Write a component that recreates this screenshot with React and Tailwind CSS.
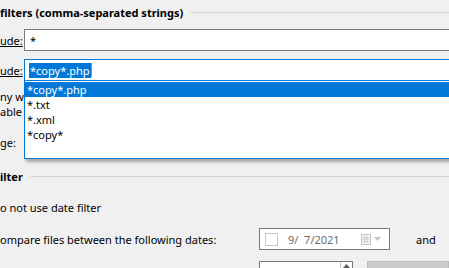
import React from 'react'

const font = { fontFamily: '"Noto Sans", "Liberation Sans", sans-serif' }

function DatePicker() {
  return (
    <div className="flex h-[22px] w-[131px] items-center border border-[#7a7a7a] bg-white">
      <span className="ml-[5px] h-[13px] w-[13px] border border-[#c8c8c8] bg-white" />
      <span className="ml-[10px] text-[#6d6d6d]">9/&nbsp;&nbsp;7/2021</span>
      <svg className="ml-auto" width="10" height="11" viewBox="0 0 10 11">
        <rect x="0.5" y="0.5" width="9" height="10" fill="#f4f4f4" stroke="#c4c4c4" />
        <path d="M2 3.5h6M2 5.5h6M2 7.5h6M3.5 2v7M6.5 2v7" stroke="#d2d2d2" />
      </svg>
      <svg className="ml-[3px] mr-[8px]" width="7" height="4" viewBox="0 0 7 4">
        <path d="M0 0h7L3.5 4z" fill="#c4c4c4" />
      </svg>
    </div>
  )
}

export default function App() {
  const items = ['*copy*.php', '*.txt', '*.xml', '*copy*']
  return (
    <div className="relative h-[268px] w-[449px] overflow-hidden bg-[#f0f0f0] text-[11px] leading-[15px] text-black" style={font}>
      <div className="mt-[4px] flex h-[17px] items-center">
        <span className="font-bold whitespace-nowrap">filters (comma-separated strings)</span>
        <span className="ml-[7px] h-px flex-1 bg-[#d4d8c8]" />
      </div>

      <div className="mt-[8px] flex h-[22px] items-center">
        <span className="w-[24px] underline">ude:</span>
        <div className="-mr-[10px] flex h-[22px] flex-1 items-center border border-[#7a7a7a] bg-white pl-[5px]">*</div>
      </div>

      <div className="mt-[8px] flex h-[22px] items-center">
        <span className="w-[24px] underline">ude:</span>
        <div className="-mr-[10px] flex h-[22px] flex-1 items-center border border-[#0078d7] bg-white pl-[4px]">
          <span className="bg-[#0078d7] px-px text-white">*copy*.php</span>
          <span className="h-[14px] w-px bg-[#d9822b]" />
        </div>
      </div>

      <div className="mt-[8px] flex flex-col">
        <span>ny w</span>
        <span>able</span>
      </div>
      <div className="mt-[12px] flex h-[22px] items-center">
        <span>ge:</span>
      </div>

      <div className="mt-[15px] flex h-[17px] items-center">
        <span className="font-bold">ilter</span>
        <span className="ml-[7px] h-px flex-1 bg-[#d5d5d5]" />
      </div>

      <div className="mt-[15px]">o not use date filter</div>

      <div className="mt-[13px] flex h-[22px] items-center">
        <span className="w-[259px] whitespace-nowrap">ompare files between the following dates:</span>
        <DatePicker />
        <span className="ml-[26px]">and</span>
      </div>

      <div className="mt-[11px] flex items-start">
        <span className="mt-[4px] w-[259px] pl-[76px] whitespace-nowrap">files that were modified in the last</span>
        <div className="flex h-[22px] w-[94px] border border-[#7a7a7a] bg-white">
          <span className="ml-auto flex h-full w-[12px] justify-center border-l border-[#c8c8c8] pt-[2px]">
            <svg width="7" height="4" viewBox="0 0 7 4">
              <path d="M3.5 0L7 4H0z" fill="#606060" />
            </svg>
          </span>
        </div>
        <div className="ml-[14px] h-[22px] flex-1 border border-[#bcbcbc] bg-[#cccccc]" />
      </div>

      <div className="absolute left-[24px] top-[80px] h-[79px] w-[440px] border border-[#0078d7] bg-white pt-px shadow-[2px_3px_3px_rgba(0,0,0,0.3)]">
        {items.map((item, idx) => (
          <div
            key={item}
            className={`h-[15px] pl-[2px] leading-[15px] ${idx === 0 ? 'bg-[#0078d7] text-white' : 'text-black'}`}
          >
            {item}
          </div>
        ))}
      </div>
    </div>
  )
}
